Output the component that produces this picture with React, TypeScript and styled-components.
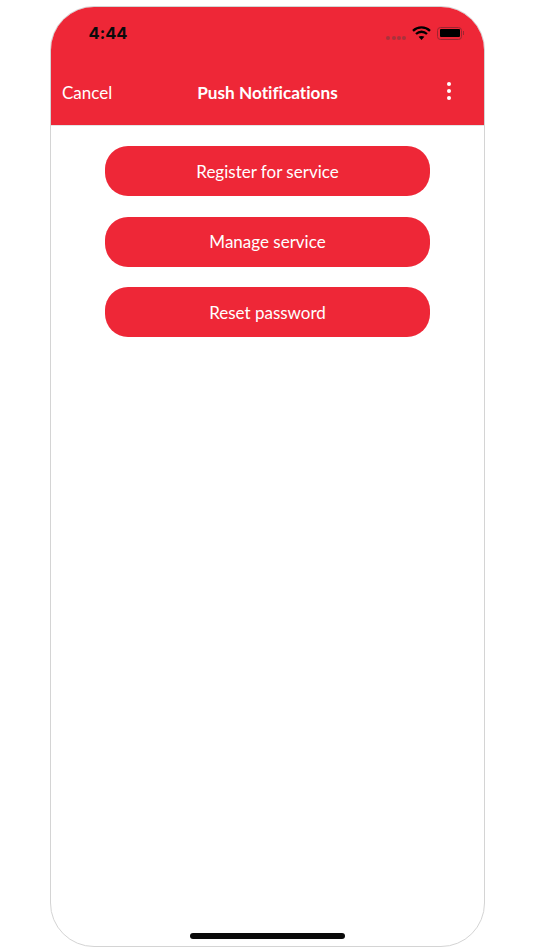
import React from "react";
import styled, { createGlobalStyle } from "styled-components";

const RED = "#ee2737";

const GlobalStyle = createGlobalStyle`
  html, body {
    margin: 0;
    padding: 0;
    background: #fff;
  }
  body {
    font-family: "Lato", "Noto Sans", sans-serif;
    font-variant-ligatures: none;
  }
`;

const Screen = styled.div`
  width: 534px;
  height: 950px;
  padding: 6px 49px 3px 50px;
  box-sizing: border-box;
`;

const Phone = styled.div`
  height: 100%;
  box-sizing: border-box;
  border: 1px solid #d4d4d4;
  border-radius: 44px;
  overflow: hidden;
  display: flex;
  flex-direction: column;
`;

const Header = styled.header`
  height: 118px;
  flex: none;
  background: ${RED};
  display: flex;
  flex-direction: column;
`;

const StatusBar = styled.div`
  height: 52px;
  display: flex;
  align-items: center;
  padding: 0 20px 0 37.5px;
`;

const Time = styled.span`
  font-family: "Inter", "Liberation Sans", sans-serif;
  font-size: 16.5px;
  font-weight: 700;
  color: #0b0b0b;
  flex: 1;
`;

const SignalDots = styled.div`
  display: flex;
  gap: 1.2px;
  margin: 10px 6px 0 0;
`;

const SignalDot = styled.i`
  width: 4px;
  height: 4px;
  border-radius: 50%;
  background: #a8323c;
`;

const Battery = styled.div`
  width: 25px;
  height: 13px;
  margin-left: 6px;
  box-sizing: border-box;
  border: 1px solid #9c2530;
  border-radius: 3.5px;
  padding: 1.5px;
  display: flex;
`;

const BatteryFill = styled.div`
  flex: 1;
  background: #000;
  border-radius: 1px;
`;

const BatteryTip = styled.div`
  width: 1px;
  height: 4px;
  margin-left: 1px;
  background: #9c2530;
`;

const NavBar = styled.nav`
  flex: 1;
  display: grid;
  grid-template-columns: 1fr auto 1fr;
  align-items: center;
  padding: 0 11px;
  color: #fff;
`;

const Cancel = styled.span`
  font-size: 17px;
`;

const Title = styled.h1`
  margin: 0;
  font-size: 17.2px;
  font-weight: 700;
`;

const MenuDots = styled.div`
  justify-self: end;
  margin: 0 22px 2px 0;
  display: flex;
  flex-direction: column;
  gap: 2.5px;
`;

const MenuDot = styled.i`
  width: 4.5px;
  height: 4.5px;
  border-radius: 50%;
  background: #fff;
`;

const Content = styled.main`
  flex: 1;
  border-top: 1px solid #e4e4e4;
  padding: 20px 54px 0;
  display: flex;
  flex-direction: column;
  gap: 20.5px;
`;

const ActionButton = styled.button`
  height: 50px;
  border: 0;
  border-radius: 23px;
  background: ${RED};
  color: #fff;
  font-family: inherit;
  font-size: 17px;
  font-variant-ligatures: none;
  padding: 0;
`;

const HomeBar = styled.div`
  flex: none;
  align-self: center;
  width: 155px;
  height: 6px;
  margin-bottom: 7px;
  border-radius: 3px;
  background: #0a0a0a;
`;

const WifiIcon = () => (
  <svg width="19" height="14" viewBox="0 0 19 14" fill="none" stroke="#000" strokeWidth="2.3">
    <path d="M1 4.8C5.8 0.2 13.2 0.2 18 4.8" />
    <path d="M4 8C7.2 5 11.8 5 15 8" />
    <path d="M9.5 14 6.6 10.8C8.2 9.6 10.8 9.6 12.4 10.8Z" fill="#000" stroke="none" />
  </svg>
);

const actions = ["Register for service", "Manage service", "Reset password"];

export default function App() {
  return (
    <Screen>
      <GlobalStyle />
      <Phone>
        <Header>
          <StatusBar>
            <Time>4:44</Time>
            <SignalDots>
              {[0, 1, 2, 3].map((i) => (
                <SignalDot key={i} />
              ))}
            </SignalDots>
            <WifiIcon />
            <Battery>
              <BatteryFill />
            </Battery>
            <BatteryTip />
          </StatusBar>
          <NavBar>
            <Cancel>Cancel</Cancel>
            <Title>Push Notifications</Title>
            <MenuDots>
              <MenuDot />
              <MenuDot />
              <MenuDot />
            </MenuDots>
          </NavBar>
        </Header>
        <Content>
          {actions.map((label) => (
            <ActionButton key={label}>{label}</ActionButton>
          ))}
        </Content>
        <HomeBar />
      </Phone>
    </Screen>
  );
}
